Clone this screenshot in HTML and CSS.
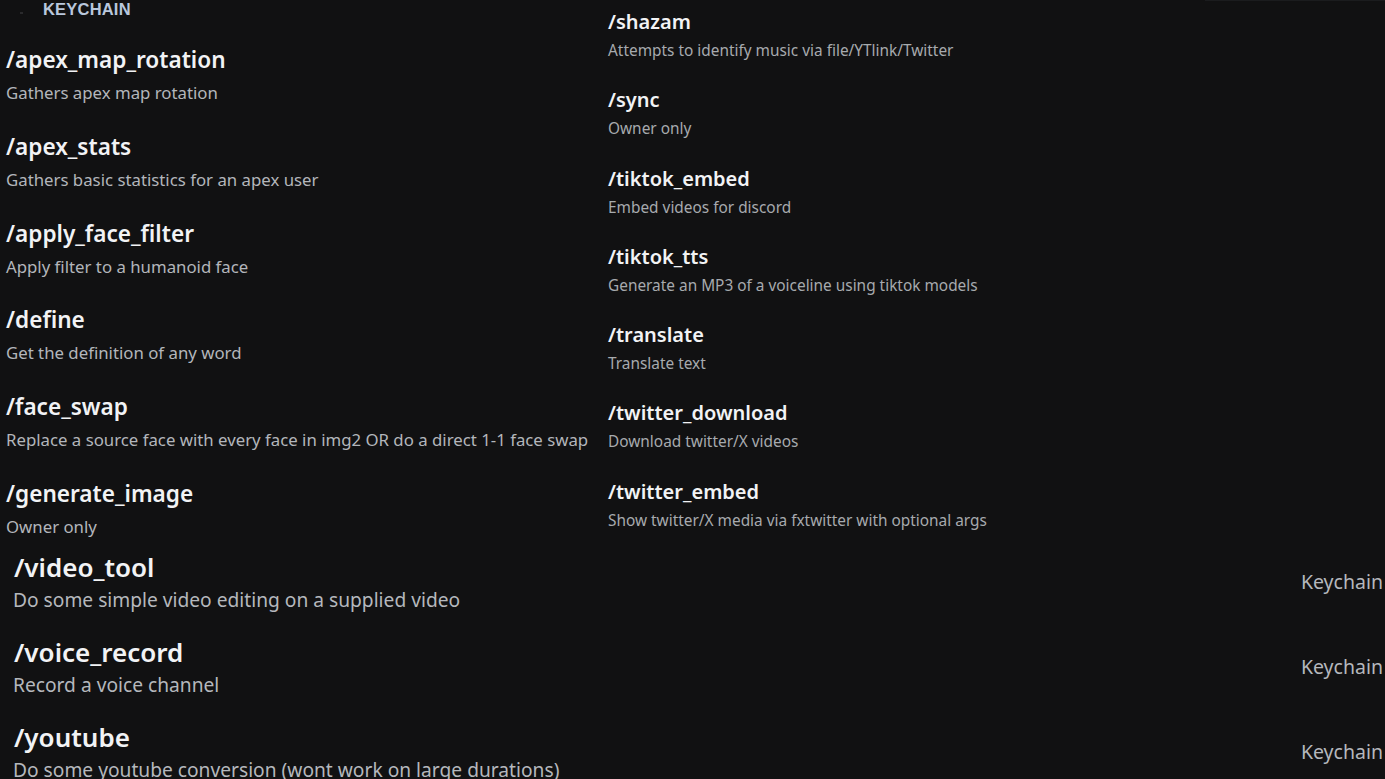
FILE: index.html
```html
<!DOCTYPE html>
<html>
<head>
<meta charset="utf-8">
<link rel="stylesheet" href="styles.css">
</head>
<body>
<div class="page">
  <div class="top">
    <div class="col-left">
      <div class="header"><span class="dot"></span><span class="cat">KEYCHAIN</span></div>
      <div class="list-left">
        <div class="cmd"><div class="t">/apex_map_rotation</div><div class="d">Gathers apex map rotation</div></div>
        <div class="cmd"><div class="t">/apex_stats</div><div class="d">Gathers basic statistics for an apex user</div></div>
        <div class="cmd"><div class="t">/apply_face_filter</div><div class="d">Apply filter to a humanoid face</div></div>
        <div class="cmd"><div class="t">/define</div><div class="d">Get the definition of any word</div></div>
        <div class="cmd"><div class="t">/face_swap</div><div class="d">Replace a source face with every face in img2 OR do a direct 1-1 face swap</div></div>
        <div class="cmd"><div class="t">/generate_image</div><div class="d">Owner only</div></div>
      </div>
    </div>
    <div class="col-right">
      <div class="rcmd"><div class="t">/shazam</div><div class="d">Attempts to identify music via file/YTlink/Twitter</div></div>
      <div class="rcmd"><div class="t">/sync</div><div class="d">Owner only</div></div>
      <div class="rcmd"><div class="t">/tiktok_embed</div><div class="d">Embed videos for discord</div></div>
      <div class="rcmd"><div class="t">/tiktok_tts</div><div class="d">Generate an MP3 of a voiceline using tiktok models</div></div>
      <div class="rcmd"><div class="t">/translate</div><div class="d">Translate text</div></div>
      <div class="rcmd"><div class="t">/twitter_download</div><div class="d">Download twitter/X videos</div></div>
      <div class="rcmd"><div class="t">/twitter_embed</div><div class="d">Show twitter/X media via fxtwitter with optional args</div></div>
    </div>
  </div>
  <div class="bottom">
    <div class="brow"><div class="bmain"><div class="t">/video_tool</div><div class="d">Do some simple video editing on a supplied video</div></div><div class="src">Keychain</div></div>
    <div class="brow"><div class="bmain"><div class="t">/voice_record</div><div class="d">Record a voice channel</div></div><div class="src">Keychain</div></div>
    <div class="brow"><div class="bmain"><div class="t">/youtube</div><div class="d">Do some youtube conversion (wont work on large durations)</div></div><div class="src">Keychain</div></div>
  </div>
</div>
</body>
</html>
```

FILE: styles.css
```css
* { box-sizing: border-box; }
html, body {
  margin: 0;
  padding: 0;
  background: #111112;
  overflow: hidden;
}
body {
  font-family: "Noto Sans", "Open Sans", sans-serif;
  width: 1385px;
  height: 779px;
}
.page {
  width: 1385px;
  height: 779px;
  overflow: hidden;
}
.top {
  display: grid;
  grid-template-columns: 602px 1fr;
  height: 538px;
  position: relative;
}
.top::after {
  content: "";
  position: absolute;
  top: 0;
  left: 1205px;
  right: 0;
  height: 1px;
  background: #1b1c1e;
}
.col-left {
  padding-left: 6px;
}
.header {
  display: flex;
  align-items: center;
  height: 18px;
  margin-bottom: 28px;
}
.dot {
  width: 3px;
  height: 2px;
  background: #2a2a2c;
  margin-left: 14px;
  margin-top: 8px;
}
.cat {
  margin-left: 20px;
  font-family: "Liberation Sans", Arial, sans-serif;
  font-weight: 700;
  font-size: 16.5px;
  color: #b9c7dc;
  letter-spacing: 0.2px;
}
.list-left {
  display: flex;
  flex-direction: column;
  gap: 28.8px;
}
.cmd .t {
  font-size: 22.6px;
  line-height: 28px;
  font-weight: 600;
  color: #f2f3f5;
}
.cmd .d {
  margin-top: 8px;
  font-size: 16.8px;
  line-height: 22px;
  color: #b3b6bb;
}
.col-right {
  padding-left: 6px;
  padding-top: 9px;
  display: flex;
  flex-direction: column;
  gap: 26.3px;
}
.rcmd .t {
  font-size: 20px;
  line-height: 26px;
  font-weight: 600;
  color: #f2f3f5;
}
.rcmd .d {
  margin-top: 6px;
  font-size: 15.4px;
  line-height: 20px;
  color: #a7aaae;
}
.bottom {
  padding-top: 14px;
  display: flex;
  flex-direction: column;
  gap: 26px;
}
.brow {
  display: flex;
  align-items: center;
  justify-content: space-between;
  padding-left: 13px;
  padding-right: 2px;
}
.brow .t {
  font-size: 26px;
  line-height: 30px;
  font-weight: 600;
  color: #f2f3f5;
  padding-left: 1px;
}
.brow .d {
  margin-top: 7px;
  font-size: 19.2px;
  line-height: 22px;
  color: #b5b8bd;
}
.src {
  font-size: 19.5px;
  color: #b5b8bd;
}
```
